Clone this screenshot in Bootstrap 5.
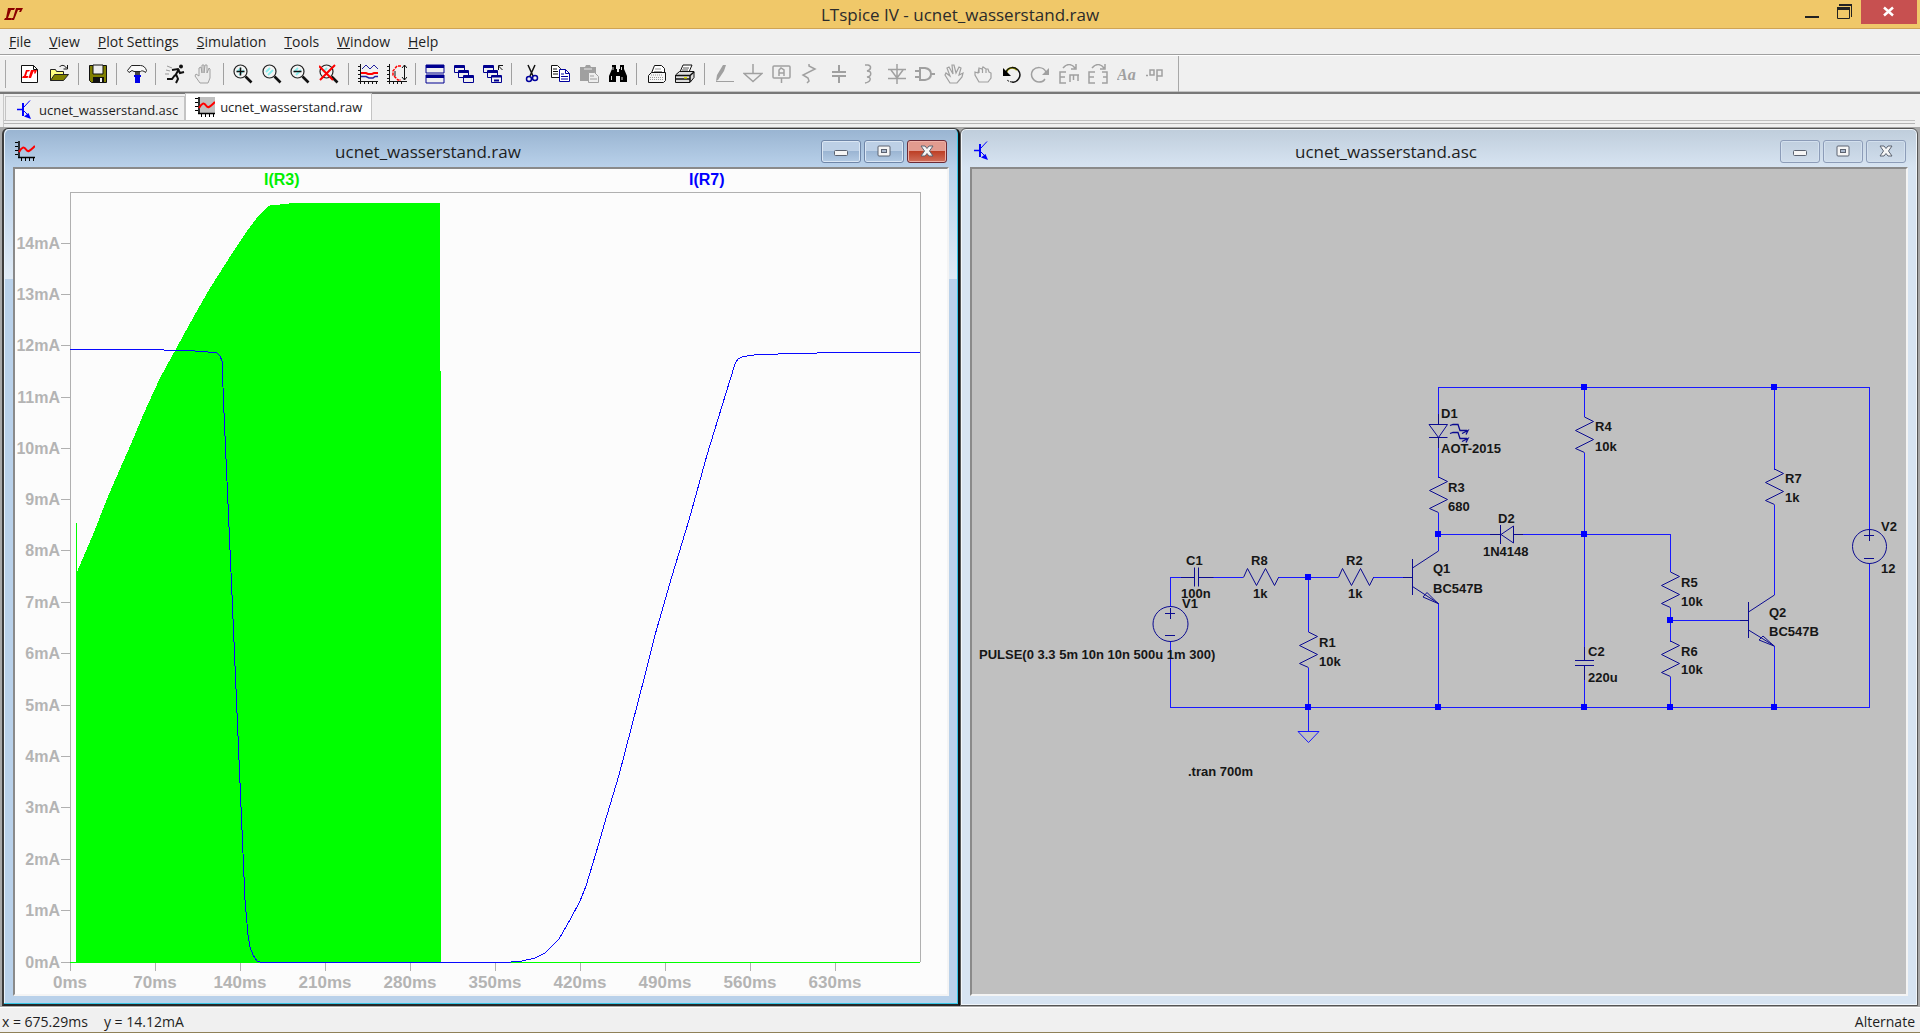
<!DOCTYPE html>
<html lang="en">
<head>
<meta charset="utf-8">
<meta name="viewport" content="width=device-width, initial-scale=1">
<title>LTspice IV - ucnet_wasserstand.raw</title>
<link rel="stylesheet" href="https://cdn.jsdelivr.net/npm/bootstrap@5.3.0/dist/css/bootstrap.min.css">
<style>
  :root { --face: #f0f0f0; --ui: "Open Sans", "Noto Sans", sans-serif; }
  body { font-family: var(--ui); font-size: 14px; line-height: 20px; color: #1e1e1e; background: var(--face); }
  button { border: 0; padding: 0; background: none; color: inherit; }
  svg { display: block; }
  .titlebar { display: grid; grid-template: 28px / 1fr auto 1fr; height: 29px; background: #f0c869; border-bottom: 1px solid #cfa455; }
  .app-title { font-size: 17px; line-height: 30px; color: #2b2b2b; }
  .app-controls { padding-right: 3px; }
  .app-controls button { height: 24px; }
  .app-controls .quit { background: #c75050; }
  .menubar { height: 26px; border-bottom: 1px solid #a0a0a0; }
  .menubar button { padding: 0 9px; line-height: 24px; }
  .toolbar-row { height: 39px; border-top: 1px solid #fff; border-bottom: 2px solid #787878; box-shadow: inset 0 -1px #c4c4c4; padding-left: 4px; }
  .grip { width: 2px; height: 28px; border-right: 1px solid #a8a8a8; margin-right: 10px; }
  .tools { width: 1154px; }
  .tools button { flex: 1 1 0; min-width: 0; height: 28px; display: flex; align-items: center; justify-content: center; }
  .tools .sep { width: 10px; height: 22px; background: linear-gradient(#a0a0a0, #a0a0a0) 4px 0 / 1px 100% no-repeat; }
  .band-end { width: 9px; border-right: 1px solid #a8a8a8; }
  .tabs-row { height: 33px; margin: 0 5px 0 3px; border-left: 1px solid #c8c8c8; }
  .tabs-inner { height: 27px; border-bottom: 1px solid #c0c0c0; padding-left: 1px; }
  .tabs-inner + div { height: 3px; border-bottom: 1px solid #b4b4b4; }
  .file-tab { font-size: 13px; height: 24px; border: 1px solid #c4c4c4; border-bottom: 0; gap: 4px; padding: 2px 6px 0 9px; }
  .file-tab.current { height: 27px; background: #fff; padding: 0 9px 1px 9px; gap: 5px; }
  .mdi { padding: 1px 2px 1px 2px; min-height: 0; background: #a8a8a8; }
  .child { flex: 1 1 50%; min-width: 0; border-radius: 6px 6px 0 0; }
  .child-on { border: solid; border-width: 1px 2px 2px 2px; border-color: #3c3c3c #101010 #262626 #3c3c3c;
    box-shadow: inset -1px -1px #35c6e6, inset 1px 1px #e8f2fb; padding: 1px 9px 8px 9px;
    background: linear-gradient(#99b4d1 0, #b9d1ea 38px, #e0ebf6 150px, #b9d1ea 150px); }
  .child-off { border: 1px solid #555; box-shadow: inset 0 0 0 1px #f1f6fb; padding: 1px 9px 9px;
    background: linear-gradient(#bfcddb 0, #d7e4f2 38px); }
  .child-bar { height: 37px; padding: 5px 2px 0; }
  .child-title { font-size: 17px; line-height: 22px; padding-top: 2px; }
  .caps { gap: 3px; }
  .cap-btn { width: 40px; height: 23px; border: 1px solid #6f86a8; border-radius: 3px; box-shadow: inset 0 0 0 1px #dbe7f4; background: linear-gradient(#bdd0e6 48%, #9bb5d3 50%, #b4cbe4); }
  .child-off .cap-btn { border-color: #8c9cb8; box-shadow: inset 0 0 0 1px #d3e0ee; background: linear-gradient(#c0cfdf, #cfdcea); }
  .child-on .cap-btn.shut { border-color: #6b2a35; box-shadow: inset 0 0 0 1px #eeb0a6; background: linear-gradient(#e29b8f 48%, #bd4026 50%, #d0705c); }
  .cap-btn svg { margin: auto; }
  .client { border: 2px solid; border-color: #8a8a8a #f4f4f4 #f4f4f4 #8a8a8a; min-height: 0; overflow: hidden; }
  .client svg { width: 100%; height: 100%; }
  .plot-bg { background: #fcfcfc; }
  .sheet-bg { background: #c0c0c0; }
  .statusbar { height: 26px; border-top: 1px solid #fff; border-bottom: 1px solid #8f8158; padding: 4px 5px 0 2px; }
  .axis { font: bold 16px "Liberation Sans", Arial, sans-serif; fill: #b4b4b4; }
  .axis-x { font-size: 17px; text-anchor: middle; }
  .axis-y { text-anchor: end; }
  .lbl { font: bold 13px "Liberation Sans", Arial, sans-serif; fill: #161616; }
  .glyph { font: italic bold 16px "Liberation Serif", serif; fill: #a0a0a0; }
  .thin { fill: none; stroke: #b0b0b0; shape-rendering: crispEdges; }
  .wire { fill: none; stroke: #1818ff; stroke-width: 1; shape-rendering: crispEdges; }
  .part { fill: none; stroke: #0a0a90; stroke-width: 1; }
</style>
<script src="https://cdn.jsdelivr.net/npm/bootstrap@5.3.0/dist/js/bootstrap.bundle.min.js"></script>
</head>
<body class="d-flex flex-column vh-100 overflow-hidden">

<!-- shared glyphs -->
<svg width="0" height="0" class="position-absolute" aria-hidden="true">
  <symbol id="npn" viewBox="-2 0 20 20"><g stroke="#00f" fill="none"><path d="M0 9.500h5.500" stroke-width="1.500"/><path d="M6 3v13" stroke-width="2"/><path d="M7 7l6-6.500M7 11l4 4"/><path d="M14 19l-7-2.500 4.500-3.500z" fill="#00f" stroke="none"/></g></symbol>
  <symbol id="wave" viewBox="0 0 20 20"><path d="M3 0h17v16H3z" fill="#c0c0c0"/><path d="M4 0v17M3 16.500h17" stroke="#000" stroke-width="1.500" fill="none"/><path d="M0 1.500h3M0 5.500h3M0 9.500h3M0 13.500h3M6.500 17v3M10.500 17v3M14.500 17v3M18.500 17v3" stroke="#000"/><path d="M4 11c3-5 5-6 7-2.500s4 1 9-3.500" fill="none" stroke="#f00" stroke-width="2"/></symbol>
  <symbol id="wave-plain" viewBox="0 0 20 20"><path d="M4 0v17M3 16.500h17" stroke="#000" stroke-width="1.500" fill="none"/><path d="M0 1.500h3M0 5.500h3M0 9.500h3M0 13.500h3M6.500 17v3M10.500 17v3M14.500 17v3M18.500 17v3" stroke="#000"/><path d="M4 11c3-5 5-6 7-2.500s4 1 9-3.500" fill="none" stroke="#f00" stroke-width="2"/></symbol>
  <symbol id="lens" viewBox="0 0 20 20"><circle cx="7.500" cy="7.500" r="6.500" fill="#f4f4f4" stroke="#222" stroke-width="1.200"/><path d="M4 8l4-4M6 11l5-5" stroke="#8ee" stroke-width="1.800"/><path d="M12.500 12.500l6 6" stroke="#111" stroke-width="2.600"/></symbol>
  <symbol id="min" viewBox="0 0 14 14"><rect x=".5" y="6.500" width="13" height="5" rx="1" fill="#f5f5f5" stroke="#5b6270"/></symbol>
  <symbol id="max" viewBox="0 0 14 12"><rect x="1" y="1" width="12" height="10" rx="1" fill="#f5f5f5" stroke="#5b6270"/><rect x="4.500" y="4.500" width="5" height="3" fill="#aab8cc" stroke="#5b6270"/></symbol>
  <symbol id="ex" viewBox="0 0 14 12"><path d="M1 1h4l2 2.500L9 1h4L9.500 6l3.500 5H9L7 8.500 5 11H1L4.500 6z" fill="#f5f5f5" stroke="#5b6270"/></symbol>
  <symbol id="res" viewBox="0 0 20 36" overflow="visible"><path d="M10 0L19 4.500 1 13.500 19 22.500 1 31.500 10 35.500" fill="none" stroke="#0a0a90"/></symbol>
</svg>

<header class="titlebar flex-shrink-0">
  <div class="d-flex align-items-center ps-1"><svg width="19" height="12" viewBox="0 0 19 12" fill="#8b0000" aria-hidden="true"><path d="M4 0h7L10 2H7L4 10h4l-1 2H0l1-2h1z"/><path d="M12 0h7l-2 4h-2l1-2h-2l-4 10H7l1-2h1z"/></svg></div>
  <div class="app-title">LTspice IV - ucnet_wasserstand.raw</div>
  <div class="app-controls d-flex justify-content-end">
    <button aria-label="Minimize"><svg width="35" height="24"><path d="M3 16h14v2H3z" fill="#222"/></svg></button>
    <button aria-label="Restore"><svg width="24" height="24"><path d="M2 4h13v13h-1V6H2z" fill="#222"/><path d="M.5 8.500h12v10H.5z" fill="#f0c869" stroke="#222"/><path d="M0 7h13v3H0z" fill="#222"/></svg></button>
    <button class="quit" aria-label="Close"><svg width="56" height="24"><path d="M23 7.500l9 8M32 7.500l-9 8" stroke="#fff" stroke-width="2.500"/></svg></button>
  </div>
</header>

<nav class="menubar d-flex flex-shrink-0" aria-label="Menu">
  <button><u>F</u>ile</button><button><u>V</u>iew</button><button><u>P</u>lot Settings</button><button><u>S</u>imulation</button><button><u>T</u>ools</button><button><u>W</u>indow</button><button><u>H</u>elp</button>
</nav>

<div class="toolbar-row d-flex align-items-center flex-shrink-0">
  <span class="grip flex-shrink-0"></span>
  <div class="tools d-flex align-items-center flex-shrink-0" role="toolbar" aria-label="Main toolbar">
    <button aria-label="New schematic"><svg width="20" height="20"><path d="M1.500 1.500h12l4 4v13h-16z" fill="#fff" stroke="#111"/><path d="M13.500 1.500v4h4" fill="none" stroke="#111"/><path d="M6 6h4L9 7.500H7.500L6 12h2.500l-1 2H2l1-2h1zM11 6h6l-1.500 3.500H14l.500-2h-1L11 14H8.500z" fill="#f00"/></svg></button>
    <button aria-label="Open"><svg width="20" height="20"><path d="M1.500 16.500v-11h5l1 2h7v3" fill="#ffff80" stroke="#222"/><path d="M1.500 16.500l4-6h14l-5 6z" fill="#808000" stroke="#222"/><path d="M10.500 3c2-2.500 5-2 7 1M18.500 1v4h-4" fill="none" stroke="#111"/></svg></button>
    <span class="sep"></span>
    <button aria-label="Save"><svg width="20" height="20"><path d="M1.500 1.500h17v17h-15l-2-2z" fill="#808000" stroke="#111"/><path d="M5 1h10v9H5z" fill="#eee" stroke="#111"/><path d="M5 13h11v6H5z" fill="#111"/><path d="M12 14h2v4h-2z" fill="#eee"/></svg></button>
    <span class="sep"></span>
    <button aria-label="Control panel"><svg width="20" height="20"><path d="M.5 6.500l4-5h9c3 0 5 2 6 5l-1 2c-2-2-4-2-5-1H7l-2-1-3 2z" fill="#f8f8f8" stroke="#222"/><path d="M8 8h5v4H8z" fill="#444"/><path d="M7 11h7v2h-1v6H8v-6H7z" fill="#0000e8"/></svg></button>
    <span class="sep"></span>
    <button aria-label="Run"><svg width="20" height="20"><circle cx="16" cy="2.500" r="2" fill="#111"/><path d="M14 5L10 12M7 6l6-1 2 4 4-1M11 10l2 5-2 4M10 11l-3 4H2" fill="none" stroke="#111" stroke-width="2"/><path d="M2 2l5 2M1 6l4 1M0 10l4 0" stroke="#999"/></svg></button>
    <button aria-label="Halt"><svg width="20" height="20"><path d="M6 19L1 12l1-2 3 2V4l2-1 1 6V1h2v8l1-8h2v8l2-5 1 1v9l-2 5z" fill="#ececec" stroke="#a0a0a0"/></svg></button>
    <span class="sep"></span>
    <button aria-label="Zoom in"><svg width="20" height="20"><use href="#lens"/><path d="M3.500 7.500h8M7.500 3.500v8" stroke="#111" stroke-width="1.500"/></svg></button>
    <button aria-label="Pan"><svg width="20" height="20"><use href="#lens"/></svg></button>
    <button aria-label="Zoom out"><svg width="20" height="20"><use href="#lens"/><path d="M3.500 7.500h8" stroke="#111" stroke-width="1.500"/></svg></button>
    <button aria-label="Zoom full extents"><svg width="20" height="20"><use href="#lens"/><path d="M0 2l14 14M16 1L1 16" stroke="#f00" stroke-width="2"/></svg></button>
    <span class="sep"></span>
    <button aria-label="Autorange"><svg width="20" height="20"><path d="M2.500 0v20M0 17.500h20M0 2.500h3M0 6.500h3M0 10.500h3M0 14.500h3M6.500 17v3M10.500 17v3M14.500 17v3M18.500 17v3" stroke="#111" fill="none"/><path d="M4 5l4-4 4 4 4-4 4 4" fill="none" stroke="#2020a0"/><path d="M3 9h5l2 1h4l2-1h4" fill="none" stroke="#f00" stroke-width="2"/><path d="M3 12.500h5l3 1.500h4l2-1.500h3" fill="none" stroke="#2020a0" stroke-width="1.500"/></svg></button>
    <button aria-label="Plot limits"><svg width="20" height="20"><path d="M2.500 0v20M0 17.500h20M0 2.500h3M0 6.500h3M0 10.500h3M0 14.500h3M6.500 17v3M10.500 17v3M14.500 17v3" stroke="#111" fill="none"/><path d="M14 2H10L6 7v4l5 5h3" fill="none" stroke="#f00" stroke-dasharray="3 1" stroke-width="1.500"/><path d="M17.500 1v15M15 4l2.500-3L20 4M15 13l2.500 3 2.500-3M8 7v5" fill="none" stroke="#111"/></svg></button>
    <span class="sep"></span>
    <button aria-label="Tile windows"><svg width="20" height="20"><path d="M1 1h18v8H1zM1 11h18v8H1z" fill="#f0f0f0" stroke="#000090"/><path d="M1 1h18v3H1zM1 11h18v3H1z" fill="#000090"/></svg></button>
    <button aria-label="Cascade windows"><svg width="20" height="20" fill="#f0f0f0" stroke="#000090"><path d="M.5 1.500h10v7H.5z"/><path d="M1 2.500h9" stroke-width="3"/><path d="M4.500 6.500h10v7h-10z"/><path d="M5 7.500h9" stroke-width="3"/><path d="M9.500 11.500h10v7h-10z"/><path d="M10 12.500h9" stroke-width="3"/></svg></button>
    <button aria-label="Close all windows"><svg width="20" height="20" fill="#f0f0f0" stroke="#000090"><path d="M.5 1.500h10v7H.5z"/><path d="M1 2.500h9" stroke-width="3"/><path d="M4.500 6.500h10v7h-10z"/><path d="M5 7.500h9" stroke-width="3"/><path d="M8.500 11.500h10v7h-10z"/><path d="M9 12.500h9M11 16.500h5" stroke-width="2"/><path d="M19.500 6l-4-4M15.500 6V1.500H20" stroke="#111" fill="none"/></svg></button>
    <span class="sep"></span>
    <button aria-label="Cut"><svg width="20" height="20" fill="none"><path d="M6 1l5 11M13 1L8 12" stroke="#111" stroke-width="1.500"/><circle cx="7" cy="15" r="2.500" stroke="#00009c" stroke-width="1.500"/><circle cx="13" cy="14" r="2.500" stroke="#00009c" stroke-width="1.500"/></svg></button>
    <button aria-label="Copy"><svg width="20" height="20"><path d="M1.500 1.500h6l3 3v9h-9z" fill="#fff" stroke="#111"/><path d="M3 5h4M3 7.500h5M3 10h5" stroke="#111"/><path d="M9.500 5.500h6l4 4v8h-10z" fill="#fff" stroke="#00009c"/><path d="M15.500 5.500v4h4M11 10h3M11 12.500h7M11 15h7" fill="none" stroke="#00009c"/></svg></button>
    <button aria-label="Paste"><svg width="20" height="20"><path d="M1 3h5l1-2h4l1 2h5v14H1z" fill="#a0a0a0"/><path d="M5 5h8" stroke="#e8e8e8"/><path d="M9.500 8.500h6l4 4v6h-10z" fill="#eee" stroke="#a0a0a0"/><path d="M11 12h4M11 15h7" stroke="#a0a0a0"/></svg></button>
    <button aria-label="Find"><svg width="20" height="20"><path d="M4 1h4v4h1v3h2V5h1V1h4v4l3 7v6h-7v-6H8v6H1v-6l3-7z" fill="#000"/><path d="M5 3v3M13.500 3v3M3.500 12v4M14 13v3" stroke="#ddd"/></svg></button>
    <span class="sep"></span>
    <button aria-label="Print setup"><svg width="20" height="20"><path d="M4.500 9l3-7.500h7l3 3V9" fill="#fff" stroke="#111"/><path d="M8 5h6M7 7.500h8" stroke="#999"/><path d="M1.500 11.500l3-3h14v8l-2 2h-15z" fill="#f6f6f6" stroke="#111"/><path d="M4 11h12M3 13.500h13M3 15.500h13" stroke="#999" stroke-dasharray="1 1"/></svg></button>
    <button aria-label="Print"><svg width="20" height="20"><path d="M5 8l3-7h9l-3 7z" fill="#fff" stroke="#111"/><path d="M8 4h6M7 6h6" stroke="#555"/><path d="M.5 11l4-3.500h14.500v6l-4 5H.5z" fill="#ddd" stroke="#111"/><path d="M1 11.500h14l4-3.500M15 11v7M1 15h14" fill="none" stroke="#111" stroke-width="1.500"/><path d="M9 13h3v1.500H9z" fill="#e0e000"/></svg></button>
    <span class="sep"></span>
    <button aria-label="Wire"><svg width="20" height="20"><path d="M2 17l1-6 6-10h3l-2 6-6 9z" fill="#a0a0a0"/><path d="M2 17.500h18" stroke="#a0a0a0"/></svg></button>
    <button aria-label="Ground"><svg width="20" height="20" fill="none" stroke="#a0a0a0" stroke-width="1.500"><path d="M10 0v9M1 9.500h18l-9 8z"/></svg></button>
    <button aria-label="Label net"><svg width="20" height="20" fill="none" stroke="#a0a0a0" stroke-width="1.500"><rect x="1" y="2" width="17" height="12" rx="1"/><path d="M9.500 14v5M7 12V6l2-2 3 2v6M7 9h5"/></svg></button>
    <button aria-label="Resistor"><svg width="20" height="20" fill="none" stroke="#a0a0a0" stroke-width="1.500"><path d="M9 0v2l6 3L3 11l5 3 1 3-2 2"/></svg></button>
    <button aria-label="Capacitor"><svg width="20" height="20" fill="none" stroke="#a0a0a0" stroke-width="2"><path d="M3 8h14M3 12h14M10 1v7M10 12v7"/></svg></button>
    <button aria-label="Inductor"><svg width="20" height="20" fill="none" stroke="#a0a0a0" stroke-width="1.500"><path d="M7 1h3c4 1 3 5-1 6 5 0 5 5 0 6 5 0 4 5-2 6"/></svg></button>
    <button aria-label="Diode"><svg width="20" height="20" fill="none" stroke="#a0a0a0" stroke-width="1.500"><path d="M10 0v20M1 5.500h18M4 6l6 8 6-8M1 14.500h18"/></svg></button>
    <button aria-label="Component"><svg width="20" height="20" fill="none" stroke="#a0a0a0" stroke-width="2"><path d="M5 4h5q6 1 6 6t-6 6H5zM0 7h5M0 13h5M16 10h4"/></svg></button>
    <button aria-label="Move"><svg width="20" height="20" fill="none" stroke="#a0a0a0"><path d="M6 19l-5-8 1-2 4 3-3-8 2-1 4 7-1-9h2l2 8 3-6 2 1-2 7 4-2-1 4-5 6z" stroke-width="1.200"/></svg></button>
    <button aria-label="Drag"><svg width="20" height="20" fill="none" stroke="#a0a0a0"><path d="M6 18l-4-7v-3l3 1 1-5 3 1 1-2 3 2h2l1 3 2 1v5l-3 4zM6 5v4M9.500 5v4M13 5v4" stroke-width="1.200"/></svg></button>
    <button aria-label="Undo"><svg width="20" height="20" fill="none"><path d="M4 9c1-5 7-7 11-3" stroke="#b0b000" stroke-width="2"/><path d="M4 8c3-6 9-5 12-2 5 6-1 13-6 12" stroke="#111" stroke-width="1.500"/><path d="M10 18c-2 0-4-1-5-2" stroke="#111" stroke-dasharray="2 1"/><path d="M1 4v8h8z" fill="#000"/></svg></button>
    <button aria-label="Redo"><svg width="20" height="20" fill="none"><path d="M16 8C13 2 6 3 3 6c-4 6 1 12 6 12s5-2 6-3" stroke="#a0a0a0" stroke-width="1.500"/><path d="M19 4v7h-7z" fill="#a0a0a0"/></svg></button>
    <button aria-label="Rotate"><svg width="20" height="20" fill="none" stroke="#a0a0a0" stroke-width="1.500"><path d="M7 8H1v11h6M1 13h5M11 18v-7h9M14.500 11v5M19 11v6M4 4c4-5 9-4 12 0M17 0v5h-5"/></svg></button>
    <button aria-label="Mirror"><svg width="20" height="20" fill="none" stroke="#a0a0a0" stroke-width="1.500"><path d="M7 8H1v11h6M1 13h5M14 8h5v11h-5M19 13h-4M4 4c4-5 9-4 12 0M17 0v5h-5"/></svg></button>
    <button aria-label="Text"><svg width="20" height="20"><text x="0" y="16" class="glyph">Aa</text></svg></button>
    <button aria-label="SPICE directive"><svg width="20" height="20" fill="none" stroke="#a0a0a0" stroke-width="1.500"><path d="M1 11.500h2M5 6h4v5H5zM12 17V6h5v6h-5"/></svg></button>
  </div>
  <span class="band-end align-self-stretch"></span>
</div>

<div class="tabs-row flex-shrink-0">
  <div class="tabs-inner d-flex align-items-end">
    <button class="file-tab d-flex align-items-center"><svg width="20" height="20"><use href="#npn"/></svg>ucnet_wasserstand.asc</button>
    <button class="file-tab current d-flex align-items-center"><svg width="20" height="20"><use href="#wave"/></svg>ucnet_wasserstand.raw</button>
  </div>
  <div></div>
</div>

<main class="mdi d-flex flex-grow-1">
  <section class="child child-on d-flex flex-column">
    <div class="child-bar d-flex align-items-center flex-shrink-0">
      <svg width="20" height="20"><use href="#wave-plain"/></svg>
      <div class="child-title flex-grow-1 text-center">ucnet_wasserstand.raw</div>
      <div class="caps d-flex">
        <button class="cap-btn" aria-label="Minimize"><svg width="14" height="14"><use href="#min"/></svg></button>
        <button class="cap-btn" aria-label="Maximize"><svg width="14" height="12"><use href="#max"/></svg></button>
        <button class="cap-btn shut" aria-label="Close"><svg width="14" height="12"><use href="#ex"/></svg></button>
      </div>
    </div>
    <div class="client plot-bg flex-grow-1">
      <svg viewBox="15 169 932 825" role="img" aria-label="Waveform plot">
        <text class="axis" x="264" y="185" style="fill:#00f000">I(R3)</text>
        <text class="axis" x="689" y="185" style="fill:#0000ff">I(R7)</text>
        <path class="thin" d="M70.500 962V192.500H920.500V962"/>
        <path class="thin" d="M61 243.500h9M61 294.500h9M61 345.500h9M61 397.500h9M61 448.500h9M61 499.500h9M61 550.500h9M61 602.500h9M61 653.500h9M61 705.500h9M61 756.500h9M61 807.500h9M61 859.500h9M61 910.500h9M61 962.500h9"/>
        <path class="thin" d="M70.500 963v8M155.500 963v8M240.500 963v8M325.500 963v8M410.500 963v8M495.500 963v8M580.500 963v8M665.500 963v8M750.500 963v8M835.500 963v8"/>
        <g class="axis axis-y">
          <text x="60" y="249">14mA</text><text x="60" y="300">13mA</text><text x="60" y="351">12mA</text><text x="60" y="403">11mA</text><text x="60" y="454">10mA</text><text x="60" y="505">9mA</text><text x="60" y="556">8mA</text><text x="60" y="608">7mA</text><text x="60" y="659">6mA</text><text x="60" y="711">5mA</text><text x="60" y="762">4mA</text><text x="60" y="813">3mA</text><text x="60" y="865">2mA</text><text x="60" y="916">1mA</text><text x="60" y="968">0mA</text>
        </g>
        <g class="axis axis-x">
          <text x="70" y="988">0ms</text><text x="155" y="988">70ms</text><text x="240" y="988">140ms</text><text x="325" y="988">210ms</text><text x="410" y="988">280ms</text><text x="495" y="988">350ms</text><text x="580" y="988">420ms</text><text x="665" y="988">490ms</text><text x="750" y="988">560ms</text><text x="835" y="988">630ms</text>
        </g>
        <path d="M77 962V572l15-35 17-43 25-57 9-22 17-37 17-31 17-31 16-28 9-14 14-22 14-21 9-12 10-11 5-3 18-1v-1h151v168h1v591z" fill="#0f0" shape-rendering="crispEdges"/>
        <path d="M76.500 523v439M70 962.500H920" fill="none" stroke="#0f0" shape-rendering="crispEdges"/>
        <path d="M70 349.500H140L188 350.500 208 352 217 353 220 356 222 361 224 413 228 504 232 595 240 783 245 900 248 935 250 947 253 955 257 961 261 962.500H506L522 961 535 958 545 953 559 939 571 918 580 901 586 886 596 853 607 815 619 775 631 729 645 675 655 635 672 576 689 520 707 455 722 406 735 364 738 359 743 356.500 754 355 778 354 837 352.500H920" fill="none" stroke="#0808ff" shape-rendering="crispEdges"/>
      </svg>
    </div>
  </section>

  <section class="child child-off d-flex flex-column">
    <div class="child-bar d-flex align-items-center flex-shrink-0">
      <svg width="20" height="20"><use href="#npn"/></svg>
      <div class="child-title flex-grow-1 text-center">ucnet_wasserstand.asc</div>
      <div class="caps d-flex">
        <button class="cap-btn" aria-label="Minimize"><svg width="14" height="14"><use href="#min"/></svg></button>
        <button class="cap-btn" aria-label="Maximize"><svg width="14" height="12"><use href="#max"/></svg></button>
        <button class="cap-btn" aria-label="Close"><svg width="14" height="12"><use href="#ex"/></svg></button>
      </div>
    </div>
    <div class="client sheet-bg flex-grow-1">
      <svg viewBox="972 169 934 825" role="img" aria-label="Schematic">
        <path class="wire" d="M1181 577.500h-10.500V607M1170.500 641v66.500H1869.500V563M1213 577.500h30M1278 577.500h60M1373 577.500h30M1308.500 577v55M1308.500 668v64M1438.500 414v-26.500H1869.500V530M1438.500 448v30M1438.500 513v38M1438.500 534.500h52M1523 534.500h147.500V572M1438.500 603v104M1584.500 387v30M1584.500 453v194M1584.500 680v27M1670.500 608v34M1670.500 677v30M1670.500 620.500h70M1774.500 387v83M1774.500 505v90M1774.500 646v61"/>
        <path d="M1298 731.500h21l-10.500 11z" fill="none" stroke="#1818ff"/>
        <g fill="#00f"><path d="M1305 574h6v6h-6zM1305 704h6v6h-6zM1435 531h6v6h-6zM1435 704h6v6h-6zM1581 384h6v6h-6zM1581 531h6v6h-6zM1581 704h6v6h-6zM1667 617h6v6h-6zM1667 704h6v6h-6zM1771 384h6v6h-6zM1771 704h6v6h-6z"/></g>
        <g class="part">
          <!-- sources -->
          <circle cx="1170.500" cy="624" r="17.500"/><circle cx="1869.500" cy="546.500" r="17"/>
          <path d="M1165 613.500h10M1170.500 608v11M1165 635.500h10M1864 535.500h10M1869.500 530v11M1864 558.500h10"/>
          <!-- capacitors -->
          <path d="M1181 577.500h13.500M1194.500 567.500v19M1198.500 567.500v19M1198.500 577.500h15M1584.500 647v13.500M1575 660.500h19M1575 665.500h19M1584.500 665v15"/>
          <!-- horizontal resistors -->
          <path d="M1243.500 577.500l4-9 9 17 9-17 9 17 4-8M1338.500 577.500l4-9 9 17 9-17 9 17 4-8"/>
          <!-- diodes -->
          <path d="M1438.500 414v10.500M1429 424.500h18.500l-9 13zM1429 437.500h18.500M1438.500 437v11M1490 534.500h10.500M1500.500 525v19M1501 534.500l12.500-8.500v17zM1513 534.500h10"/>
          <path d="M1450 425.500l3-1h5l2 6h7M1462 433.500l4-2 2-1-2 4M1450 433.500l3-1h5l2 6h7M1462 441.500l4-2 2-1-2 4" stroke-width="1.300"/>
          <!-- transistors -->
          <path d="M1403 577.500h9M1412.500 559v36M1412.500 568l26-17M1412.500 586.500l26 17M1438 603.500l-11-11-4 4.500zM1740 620.500h8M1748.500 602v36M1748.500 612l26-17M1748.500 630l26 16M1774 646l-11-10-4 4z"/>
        </g>
        <use href="#res" x="1298.500" y="632" width="20" height="36"/><use href="#res" x="1428.500" y="477" width="20" height="36"/><use href="#res" x="1574.500" y="417" width="20" height="36"/><use href="#res" x="1660.500" y="572" width="20" height="36"/><use href="#res" x="1660.500" y="641" width="20" height="36"/><use href="#res" x="1764.500" y="469" width="20" height="36"/>
        <g class="lbl">
          <text x="1186" y="565">C1</text><text x="1181" y="598">100n</text><text x="1182" y="608">V1</text>
          <text x="1251" y="565">R8</text><text x="1253" y="598">1k</text><text x="1346" y="565">R2</text><text x="1348" y="598">1k</text>
          <text x="979" y="659">PULSE(0 3.3 5m 10n 10n 500u 1m 300)</text>
          <text x="1319" y="647">R1</text><text x="1319" y="666">10k</text><text x="1188" y="776">.tran 700m</text>
          <text x="1441" y="418">D1</text><text x="1441" y="453">AOT-2015</text><text x="1448" y="492">R3</text><text x="1448" y="511">680</text>
          <text x="1498" y="523">D2</text><text x="1483" y="556">1N4148</text><text x="1433" y="573">Q1</text><text x="1433" y="593">BC547B</text>
          <text x="1595" y="431">R4</text><text x="1595" y="451">10k</text><text x="1588" y="656">C2</text><text x="1588" y="682">220u</text>
          <text x="1681" y="587">R5</text><text x="1681" y="606">10k</text><text x="1681" y="656">R6</text><text x="1681" y="674">10k</text>
          <text x="1785" y="483">R7</text><text x="1785" y="502">1k</text><text x="1769" y="617">Q2</text><text x="1769" y="636">BC547B</text>
          <text x="1881" y="531">V2</text><text x="1881" y="573">12</text>
        </g>
      </svg>
    </div>
  </section>
</main>

<footer class="statusbar d-flex justify-content-between flex-shrink-0">
  <div class="d-flex gap-3"><span>x = 675.29ms</span><span>y = 14.12mA</span></div>
  <span>Alternate</span>
</footer>
</body>
</html>
